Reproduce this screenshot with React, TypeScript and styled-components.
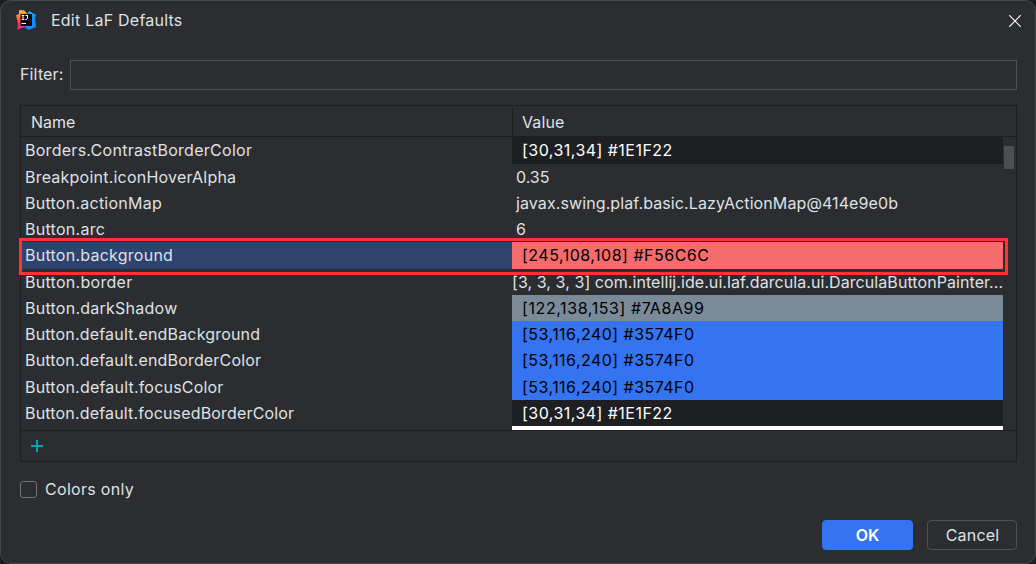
import React from "react";
import styled, { createGlobalStyle } from "styled-components";

const GlobalStyle = createGlobalStyle`
  * { box-sizing: border-box; }
  html, body { margin: 0; background: #1c1d20; overflow: hidden; }
`;

const Dialog = styled.main`
  position: relative;
  width: 1036px;
  height: 564px;
  padding: 0 18px 0 19px;
  background: #2b2d30;
  border: 1px solid #46484b;
  border-radius: 11px;
  color: #dfe1e5;
  font: 16px/26px Inter, sans-serif;
  white-space: nowrap;
`;

const TitleBar = styled.header`
  display: flex;
  align-items: center;
  height: 38px;
  margin-left: -4px;
  margin-right: -4px;
  svg { display: block; }
`;

const Title = styled.h1`
  flex: 1;
  margin: 0 0 0 15px;
  font: inherit;
  letter-spacing: 0.23px;
`;

const CloseIcon = styled.svg`
  margin-top: 2px;
`;

const FilterRow = styled.label`
  display: flex;
  height: 30px;
  margin-top: 21px;
`;

const FilterLabel = styled.span`
  width: 50px;
  padding-top: 1px;
  letter-spacing: 0.15px;
`;

const FilterInput = styled.input`
  flex: 1;
  height: 30px;
  background: #2b2d30;
  border: 1px solid #4e5157;
  border-radius: 0;
  color: inherit;
  font: inherit;
  outline: none;
`;

const TablePanel = styled.section`
  height: 357px;
  margin-top: 15px;
  border: 1px solid #1e1f22;
`;

const TableHead = styled.div`
  display: flex;
  height: 31px;
  border-bottom: 1px solid #1e1f22;
`;

const HeadCell = styled.div<{ $width?: number }>`
  width: ${(p) => (p.$width ? `${p.$width}px` : "auto")};
  margin-top: 1px;
  padding: 2px 0 0 ${(p) => (p.$width ? 10 : 9)}px;
  border-right: ${(p) => (p.$width ? "1px solid #1e1f22" : "none")};
  letter-spacing: ${(p) => (p.$width ? 0 : 0.1)}px;
`;

const TableBody = styled.div`
  display: flex;
  height: 293px;
  overflow: hidden;
`;

const Rows = styled.div`
  width: 982px;
`;

const Row = styled.div<{ $height: number }>`
  display: flex;
  height: ${(p) => p.$height}px;
`;

const NameCell = styled.div<{ $selected?: boolean; $spacing?: number }>`
  width: 491px;
  padding-left: 4px;
  background: ${(p) => (p.$selected ? "#2e436e" : "transparent")};
  letter-spacing: ${(p) => p.$spacing ?? 0.2}px;
`;

const ValueCell = styled.div<{ $fill?: string; $ink?: string; $pad?: number; $spacing?: number }>`
  width: 491px;
  padding-left: ${(p) => p.$pad ?? 10}px;
  background: ${(p) => p.$fill ?? "transparent"};
  color: ${(p) => p.$ink ?? "inherit"};
  letter-spacing: ${(p) => p.$spacing ?? 0.46}px;
`;

const ScrollThumb = styled.div`
  width: 10px;
  height: 23px;
  margin: 9px 0 0 1px;
  background: #4d4e51;
`;

const Toolbar = styled.div`
  display: flex;
  align-items: center;
  height: 31px;
  padding-left: 10px;
  border-top: 1px solid #1e1f22;
`;

const Highlight = styled.div`
  position: absolute;
  left: 18px;
  top: 237px;
  width: 989px;
  height: 37px;
  border: 3px solid #ff332f;
`;

const ColorsOnly = styled.label`
  display: flex;
  align-items: center;
  height: 26px;
  margin-top: 14px;
  letter-spacing: 0.3px;
`;

const CheckBox = styled.span`
  width: 17px;
  height: 17px;
  margin-right: 8px;
  border: 1px solid #6f737a;
  border-radius: 3px;
`;

const Footer = styled.footer`
  display: flex;
  justify-content: flex-end;
  gap: 14px;
  margin-top: 18px;
`;

const Button = styled.button<{ $primary?: boolean }>`
  width: ${(p) => (p.$primary ? 91 : 90)}px;
  height: 30px;
  padding: 0 0 0 ${(p) => (p.$primary ? 0 : 1)}px;
  border: 1px solid ${(p) => (p.$primary ? "#3574f0" : "#4e5157")};
  border-radius: 4px;
  background: ${(p) => (p.$primary ? "#3574f0" : "transparent")};
  color: ${(p) => (p.$primary ? "#fff" : "#dfe1e5")};
  font: ${(p) => (p.$primary ? 600 : 400)} 16px/26px Inter, sans-serif;
  letter-spacing: ${(p) => (p.$primary ? 0 : 0.2)}px;
`;

type Entry = {
  name: string;
  value?: string;
  height: number;
  fill?: string;
  ink?: string;
  pad?: number;
  spacing?: number;
  nameSpacing?: number;
};

const entries: Entry[] = [
  { name: "Borders.ContrastBorderColor", nameSpacing: 0.28, value: "[30,31,34] #1E1F22", height: 27, fill: "#1e1f22", ink: "#fff" },
  { name: "Breakpoint.iconHoverAlpha", nameSpacing: 0.22, value: "0.35", height: 26, pad: 4, spacing: 0 },
  { name: "Button.actionMap", nameSpacing: 0.25, value: "javax.swing.plaf.basic.LazyActionMap@414e9e0b", height: 26, pad: 4, spacing: 0.1 },
  { name: "Button.arc", nameSpacing: 0.28, value: "6", height: 26, pad: 4, spacing: 0 },
  { name: "Button.background", nameSpacing: 0.25, value: "[245,108,108] #F56C6C", height: 27, fill: "#f56c6c", ink: "#000", spacing: 0.5 },
  { name: "Button.border", nameSpacing: 0.28, value: "[3, 3, 3, 3] com.intellij.ide.ui.laf.darcula.ui.DarculaButtonPainter...", height: 26, pad: 0, spacing: 0.07 },
  { name: "Button.darkShadow", nameSpacing: 0.25, value: "[122,138,153] #7A8A99", height: 26, fill: "#7a8a99", ink: "#000", spacing: 0.6 },
  { name: "Button.default.endBackground", nameSpacing: 0.18, value: "[53,116,240] #3574F0", height: 26, fill: "#3574f0", ink: "#000" },
  { name: "Button.default.endBorderColor", nameSpacing: 0.18, value: "[53,116,240] #3574F0", height: 27, fill: "#3574f0", ink: "#000" },
  { name: "Button.default.focusColor", value: "[53,116,240] #3574F0", height: 26, fill: "#3574f0", ink: "#000" },
  { name: "Button.default.focusedBorderColor", nameSpacing: 0.17, value: "[30,31,34] #1E1F22", height: 26, fill: "#1e1f22", ink: "#fff" },
  { name: "", height: 4, fill: "#fff" },
];

const AppLogo = () => (
  <svg width="20" height="20" viewBox="0 0 20 20">
    <defs>
      <linearGradient id="warm" x1="0.3" y1="0" x2="0.4" y2="1">
        <stop offset="0" stopColor="#fcc13a" />
        <stop offset="0.4" stopColor="#fd6a35" />
        <stop offset="0.7" stopColor="#fe2d63" />
        <stop offset="1" stopColor="#fe2d9a" />
      </linearGradient>
      <linearGradient id="cool" x1="0" y1="0" x2="0.3" y2="1">
        <stop offset="0" stopColor="#10d0f5" />
        <stop offset="0.5" stopColor="#0a94f7" />
        <stop offset="1" stopColor="#128af5" />
      </linearGradient>
    </defs>
    <path d="M3 0.300h5l4 4v12l-5 1-5.500 2.400 0.500-6L0 5.200 3 4z" fill="url(#warm)" />
    <path d="M11 4l2.500-3 3 2 3.500 1.500-0.800 4 0.800 8.500-7.500 3-4.500-3.500z" fill="url(#cool)" />
    <path d="M4.500 15.500h6l-2.500 2-4-0.500z" fill="#c838c0" />
    <rect x="4.500" y="4" width="11.500" height="12" fill="#120810" />
    <path d="M5.700 5.500h2.600M7 5.500v4M5.700 9.500h2.600M9.500 5.500h2.500M11.500 5v3.500q0 1-2.200 1M5.500 13.500h4.500" stroke="#fff" fill="none" />
  </svg>
);

export default function App() {
  return (
    <>
      <GlobalStyle />
      <Dialog>
        <TitleBar>
          <AppLogo />
          <Title>Edit LaF Defaults</Title>
          <CloseIcon width="12" height="12" viewBox="0 0 12 12">
            <path d="M0.200 0.200l11.600 11.600M11.800 0.200L0.200 11.800" stroke="#fff" strokeWidth="1.200" />
          </CloseIcon>
        </TitleBar>
        <FilterRow>
          <FilterLabel>Filter:</FilterLabel>
          <FilterInput />
        </FilterRow>
        <TablePanel>
          <TableHead>
            <HeadCell $width={492}>Name</HeadCell>
            <HeadCell>Value</HeadCell>
          </TableHead>
          <TableBody>
            <Rows>
              {entries.map((e, i) => (
                <Row key={i} $height={e.height}>
                  <NameCell $selected={e.name === "Button.background"} $spacing={e.nameSpacing}>{e.name}</NameCell>
                  <ValueCell $fill={e.fill} $ink={e.ink} $pad={e.pad} $spacing={e.spacing}>{e.value}</ValueCell>
                </Row>
              ))}
            </Rows>
            <ScrollThumb />
          </TableBody>
          <Toolbar>
            <svg width="12" height="12" viewBox="0 0 12 12">
              <path d="M6 0v12M0 6h12" stroke="#0aa3b5" strokeWidth="2" />
            </svg>
          </Toolbar>
        </TablePanel>
        <ColorsOnly>
          <CheckBox />
          Colors only
        </ColorsOnly>
        <Footer>
          <Button $primary>OK</Button>
          <Button>Cancel</Button>
        </Footer>
        <Highlight />
      </Dialog>
    </>
  );
}
